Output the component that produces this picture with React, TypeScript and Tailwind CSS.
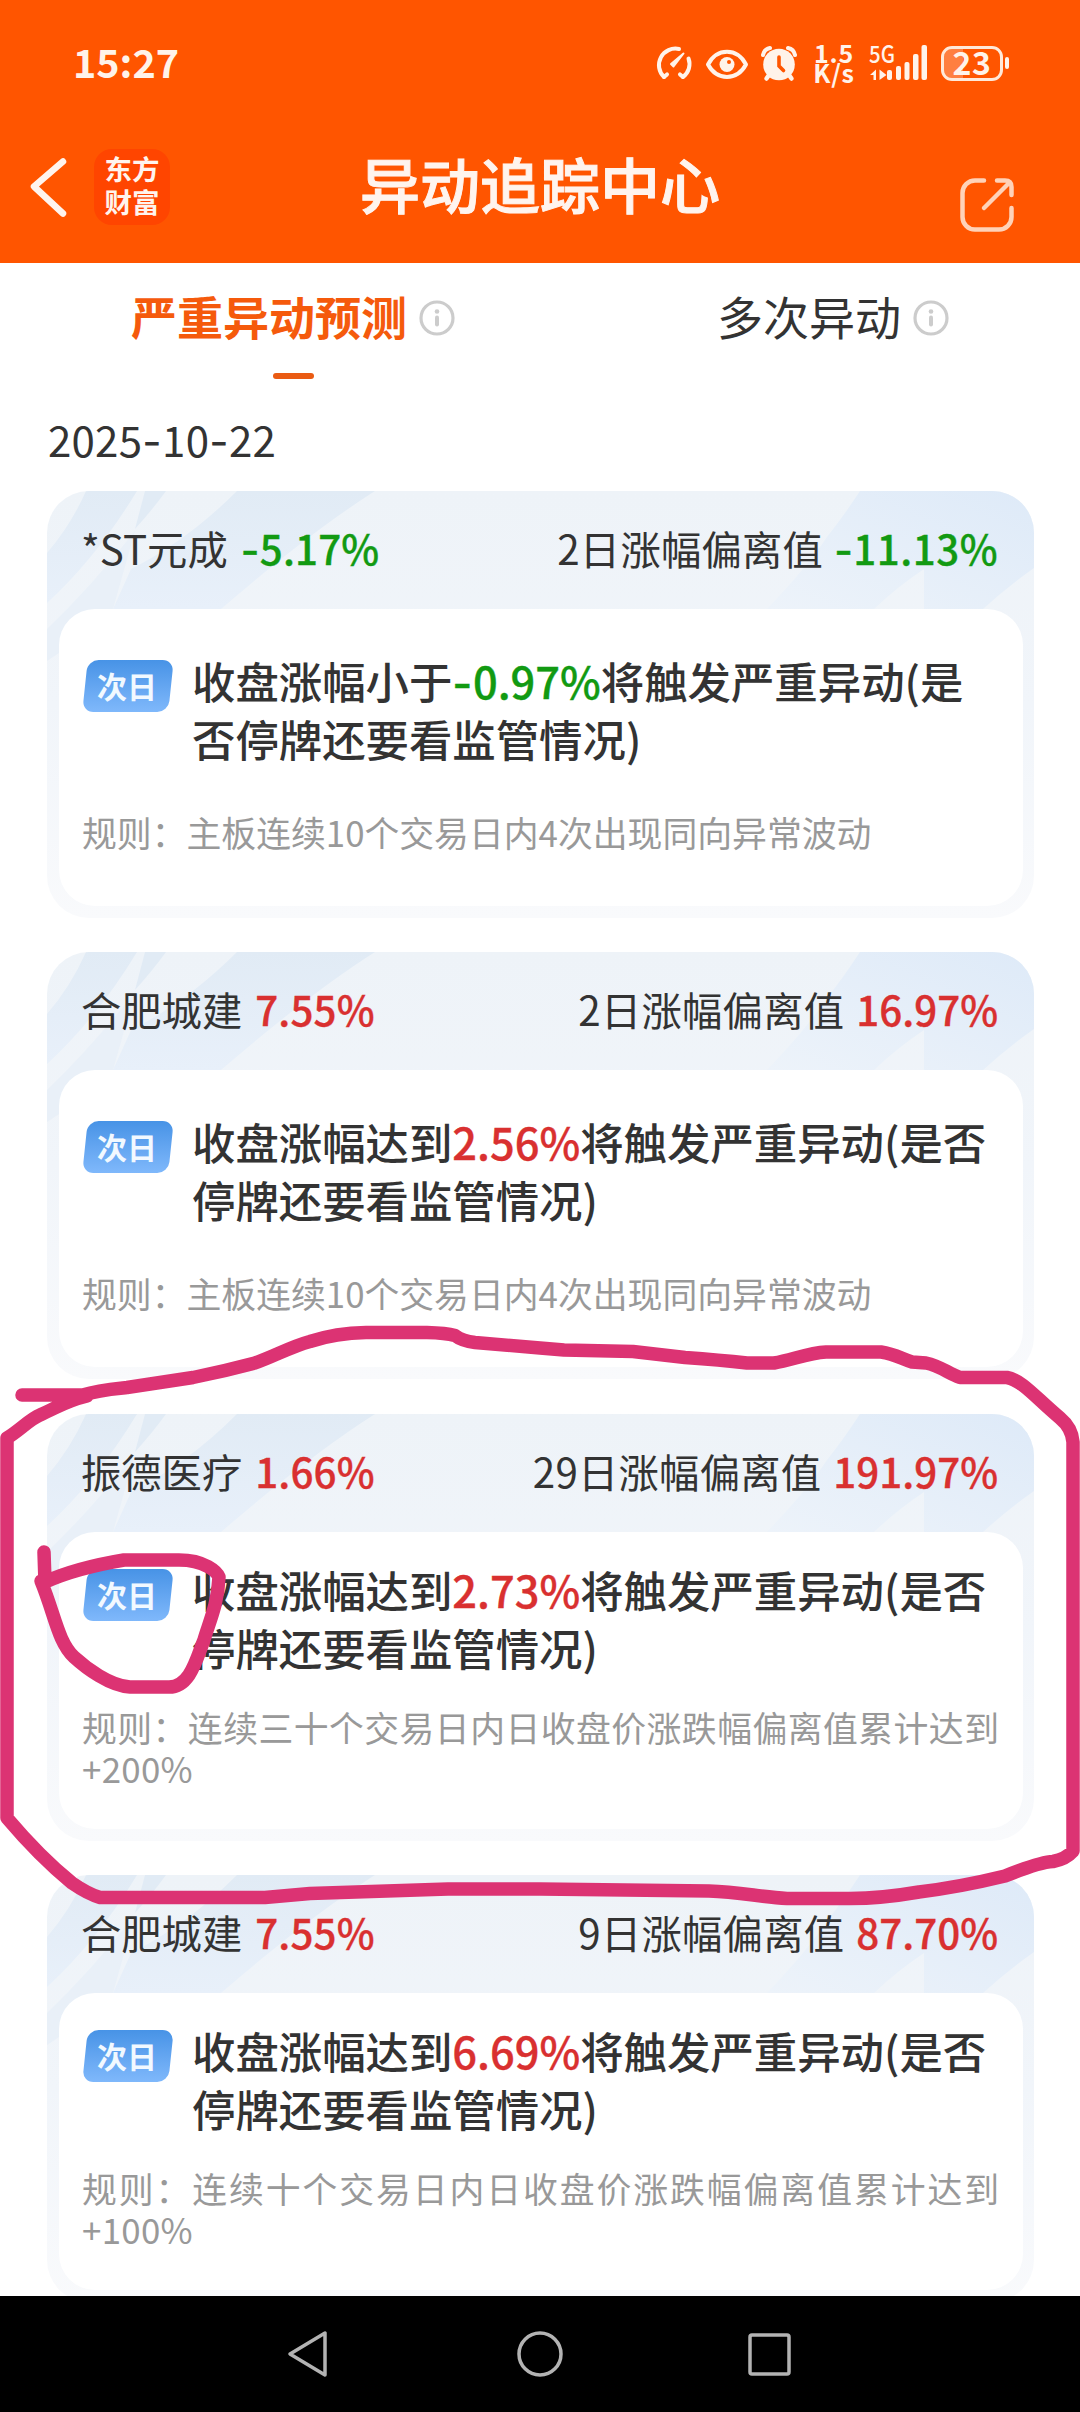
import type { ReactNode } from "react";

type Tone = "up" | "down";

interface Alert {
  name: string;
  change: string;
  tone: Tone;
  days: string;
  deviation: string;
  lead: string;
  trigger: string;
  line1: string;
  line2: string;
  rule: string;
  ruleTail?: string;
}

const alerts: Alert[] = [
  {
    name: "*ST元成",
    change: "-5.17%",
    tone: "down",
    days: "2日涨幅偏离值",
    deviation: "-11.13%",
    lead: "收盘涨幅小于",
    trigger: "-0.97%",
    line1: "将触发严重异动(是",
    line2: "否停牌还要看监管情况)",
    rule: "规则：主板连续10个交易日内4次出现同向异常波动",
  },
  {
    name: "合肥城建",
    change: "7.55%",
    tone: "up",
    days: "2日涨幅偏离值",
    deviation: "16.97%",
    lead: "收盘涨幅达到",
    trigger: "2.56%",
    line1: "将触发严重异动(是否",
    line2: "停牌还要看监管情况)",
    rule: "规则：主板连续10个交易日内4次出现同向异常波动",
  },
  {
    name: "振德医疗",
    change: "1.66%",
    tone: "up",
    days: "29日涨幅偏离值",
    deviation: "191.97%",
    lead: "收盘涨幅达到",
    trigger: "2.73%",
    line1: "将触发严重异动(是否",
    line2: "停牌还要看监管情况)",
    rule: "规则：连续三十个交易日内日收盘价涨跌幅偏离值累计达到",
    ruleTail: "+200%",
  },
  {
    name: "合肥城建",
    change: "7.55%",
    tone: "up",
    days: "9日涨幅偏离值",
    deviation: "87.70%",
    lead: "收盘涨幅达到",
    trigger: "6.69%",
    line1: "将触发严重异动(是否",
    line2: "停牌还要看监管情况)",
    rule: "规则：连续十个交易日内日收盘价涨跌幅偏离值累计达到",
    ruleTail: "+100%",
  },
];

const toneClass: Record<Tone, string> = {
  up: "text-[#d93030] [-webkit-text-stroke:0.35px_#d93030]",
  down: "text-[#129a12] [-webkit-text-stroke:0.35px_#129a12]",
};

/* Wide dashes come from Inter, the digits stay in the page font. */
function Num({ children }: { children: string }) {
  return (
    <>
      {children.split(/(-)/).map((part, i) =>
        part === "-" ? (
          <span key={i} className="font-['Inter',sans-serif] leading-none tracking-[0.5px]">
            -
          </span>
        ) : (
          part
        ),
      )}
    </>
  );
}

function StatusBar() {
  return (
    <div className="flex h-[112px] items-start pl-[73px] pr-[71px] pt-[44px] text-[#fff3ea]">
      <div className="-mt-[2px] text-[39.500px] font-bold leading-[38px]">15:27</div>
      <div className="ml-auto flex h-[38px] items-center">
        <svg width="38" height="38" viewBox="0 0 38 38" fill="none" stroke="currentColor" strokeWidth="4" strokeLinecap="round">
          <path d="M9 33 A16.500 16.500 0 0 1 24 5" />
          <path d="M33.500 14.500 A16 16 0 0 1 28 33" />
          <path d="M9 33 l3 -2.600 M28 33 l-3 -2.600" />
          <path d="M28.5 9.5 L16 20 L18.5 22.5 Z" fill="currentColor" strokeWidth="2" strokeLinejoin="round" />
        </svg>
        <svg className="ml-[12px]" width="44" height="38" viewBox="0 0 44 38" fill="none" stroke="currentColor" strokeWidth="4">
          <path d="M3 20.5 C12 3.500 32 3.500 41 20.5 C32 37 12 37 3 20.500 Z" strokeLinejoin="round" />
          <circle cx="22" cy="20.500" r="7.500" fill="currentColor" stroke="none" />
          <circle cx="24" cy="18" r="2" fill="#ff5500" stroke="none" />
        </svg>
        <svg className="ml-[11px]" width="38" height="38" viewBox="0 0 38 38" fill="none" stroke="currentColor" strokeLinecap="round">
          <circle cx="19" cy="20.500" r="15.800" fill="currentColor" stroke="none" />
          <path d="M3 11 A9 9 0 0 1 10 4 M35 11 A9 9 0 0 0 28 4" strokeWidth="4" />
          <path d="M9 31 L6.500 34.500 M29 31 L31.500 34.500" strokeWidth="4.500" />
          <path d="M19 13 V22 L23.500 26.500" stroke="#ff5500" strokeWidth="3.600" />
        </svg>
        <div className="-mt-[2px] ml-[14px] mr-px flex w-[44px] flex-col items-center text-[25px] font-bold leading-[20px] tracking-[0.8px]">
          <span>1.5</span>
          <span>K/s</span>
        </div>
        <div className="relative ml-[13px] h-[38px] w-[60px]">
          <span className="absolute -left-px -top-[2px] inline-block origin-left scale-x-[0.85] text-[24px] font-medium leading-[22px]">
            5G
          </span>
          <svg className="absolute inset-0" width="60" height="38" viewBox="0 0 60 38" fill="currentColor">
            <path d="M0 31 L6 25.500 V36 H3.500 V31 Z M16.500 31 L9.500 36 V25.500 Z" />
            <rect x="17" y="26" width="5" height="10" rx="2" />
            <rect x="26" y="22" width="5" height="14" rx="2" />
            <rect x="34.500" y="18" width="5" height="18" rx="2" />
            <rect x="43" y="10" width="5.500" height="26" rx="2" />
            <rect x="51.500" y="1" width="5.500" height="35" rx="2" />
          </svg>
        </div>
        <div className="ml-[11px] flex items-center">
          <div className="relative flex h-[35px] w-[62px] items-center justify-center rounded-[11px] border-[3px] border-[#ffe9d9]">
            <div className="absolute inset-y-0 left-0 w-[19px] rounded-l-[8px] bg-white/25" />
            <span className="relative -mt-[4px] text-[32px] font-bold leading-[32px] tracking-[0.5px]">23</span>
          </div>
          <div className="ml-[2px] h-[12px] w-[4px] rounded-sm bg-current" />
        </div>
      </div>
    </div>
  );
}

function TitleBar() {
  return (
    <div className="flex h-[151px] items-start justify-between pl-[28px] pr-[66px] text-[#fff4ee]">
      <div className="flex w-[300px] items-center pt-[37px]">
        <svg width="40" height="76" viewBox="0 0 40 76" fill="none" stroke="currentColor" strokeWidth="6.500" strokeLinecap="round" strokeLinejoin="round">
          <path d="M35 12.500 L6 37.500 L35 64.500" />
        </svg>
        <div className="ml-[26px] flex h-[76px] w-[76px] flex-col items-center justify-center rounded-[18px] bg-[#ff4500] pb-[4px] text-[27.500px] font-bold leading-[33px]">
          <span>东方</span>
          <span>财富</span>
        </div>
      </div>
      <h1 className="pt-[35px] text-[60px] font-medium leading-[72px] [-webkit-text-stroke:1px_#fff4ee]">异动追踪中心</h1>
      <div className="flex w-[262px] justify-end pt-[66px]">
        <svg width="54" height="54" viewBox="0 0 54 54" fill="none" stroke="#ffd2b8" strokeWidth="4.500" strokeLinecap="round" strokeLinejoin="round">
          <path d="M24 2.500 H15 A12.500 12.500 0 0 0 2.500 15 V39 A12.500 12.500 0 0 0 15 51.500 H39 A12.500 12.500 0 0 0 51.500 39 V30" />
          <path d="M37 2.500 H45 Q51.500 2.500 51.500 9 V17" />
          <path d="M24 30 L49 5" />
        </svg>
      </div>
    </div>
  );
}

function InfoIcon() {
  return (
    <svg className="mt-[5px]" width="36" height="36" viewBox="0 0 36 36" fill="none">
      <circle cx="18" cy="18" r="16" stroke="#cccccc" strokeWidth="3.200" />
      <circle cx="18" cy="11.500" r="2.300" fill="#cccccc" />
      <path d="M18 17.500 V24.500" stroke="#cccccc" strokeWidth="4" strokeLinecap="round" />
    </svg>
  );
}

function Tab({ label, active }: { label: string; active?: boolean }) {
  return (
    <div className="flex flex-col items-center">
      <div className="flex items-center gap-[12px]">
        <span
          className={
            active
              ? "text-[46px] font-bold leading-[56px] text-[#f55a0c]"
              : "text-[46px] leading-[56px] text-[#333333]"
          }
        >
          {label}
        </span>
        <InfoIcon />
      </div>
      {active && <div className="mt-[30px] h-[6px] w-[41px] rounded-full bg-[#ea5b13]" />}
    </div>
  );
}

function HeaderPattern() {
  return (
    <svg className="absolute left-0 top-0" width="987" height="170" viewBox="0 0 987 170" fill="none">
      <defs>
        <linearGradient id="ray" x1="0" y1="0" x2="0" y2="1">
          <stop offset="0" stopColor="#e1ebf5" />
          <stop offset="1" stopColor="#e8f0fa" />
        </linearGradient>
        <linearGradient id="glow" x1="1" y1="0" x2="0" y2="1">
          <stop offset="0" stopColor="#deeaf8" />
          <stop offset="1" stopColor="#edf3fa" />
        </linearGradient>
      </defs>
      <path d="M39 0 H90 Q50 66 0 112 V62 Q24 34 39 0 Z" fill="url(#ray)" />
      <path d="M98 0 H119 Q106 18 88 38 Z" fill="#e1ebf5" />
      <path d="M88 40 L66 118 L30 150 L0 170 V138 Q44 96 88 40 Z" fill="#e9f0f8" />
      <path d="M190 0 H328 Q262 42 174 118 H66 Q76 96 84 78 Q140 50 190 0 Z" fill="url(#ray)" />
      <path d="M813 0 H987 V77 Q960 96 936 118 H877 V78 Q850 96 827 118 H720 Q762 74 780 46 Q796 26 813 0 Z" fill="url(#glow)" />
    </svg>
  );
}

function Badge() {
  return (
    <div className="relative flex h-[52px] w-[90px] shrink-0 items-center justify-center">
      <div className="absolute inset-x-[2px] inset-y-0 -skew-x-6 rounded-[11px] bg-linear-to-b from-[#4793e6] to-[#7fb8fb]" />
      <span className="relative -mt-[2px] mr-[2px] text-[30px] font-bold leading-none text-[#f2f9ff]">次日</span>
    </div>
  );
}

function AlertCard({ alert }: { alert: Alert }) {
  const wide = Boolean(alert.ruleTail);
  const color = toneClass[alert.tone];
  return (
    <article className="relative h-[427px] shrink-0 overflow-hidden rounded-[42px] bg-linear-to-b from-[#eef3f8] via-[#f1f5fa] to-[#f9fafc] pl-[12px] pr-[11px]">
      <HeaderPattern />
      <header className="relative flex h-[118px] items-center justify-between pb-[4px] pl-[22px] pr-[25px] text-[40.300px] leading-[58px] whitespace-nowrap">
        <div>
          {alert.name}
          <span className={"ml-[13px] font-medium tracking-[0.15px] " + color}>
            <Num>{alert.change}</Num>
          </span>
        </div>
        <div>
          <span className="tracking-[0.25px]">{alert.days}</span>
          <span
            className={
              alert.tone === "down"
                ? "ml-[11px] font-medium tracking-[0.5px] " + color
                : "ml-[12px] font-medium " + color
            }
          >
            <Num>{alert.deviation}</Num>
          </span>
        </div>
      </header>
      <section
        className={
          wide
            ? "relative h-[297px] rounded-[36px] bg-white pl-[23px] pt-[28px]"
            : "relative h-[297px] rounded-[36px] bg-white pl-[23px] pt-[42px]"
        }
      >
        <div className="flex text-[43.400px] font-medium leading-[58px] whitespace-nowrap">
          <div className="ml-px mr-[19px] pt-[9px]">
            <Badge />
          </div>
          <div>
            <p>
              {alert.lead}
              <span className={color}>
                <Num>{alert.trigger}</Num>
              </span>
              {alert.line1}
            </p>
            <p>{alert.line2}</p>
          </div>
        </div>
        <div
          className={
            wide
              ? "mt-[31px] w-[917px] text-[34.850px] leading-[41px] whitespace-nowrap text-[#999999]"
              : "mt-[45px] w-[917px] text-[34.850px] leading-[41px] whitespace-nowrap text-[#999999]"
          }
        >
          <p className={wide ? "[text-align-last:justify]" : ""}>{alert.rule}</p>
          {alert.ruleTail && <p className="tracking-[0.3px]">{alert.ruleTail}</p>}
        </div>
      </section>
    </article>
  );
}

function NavBar() {
  return (
    <nav className="flex h-[116px] shrink-0 items-center justify-center gap-[183px] bg-black">
      <NavIcon>
        <path d="M40 4 V46 L5 25 Z" />
      </NavIcon>
      <NavIcon>
        <circle cx="24" cy="25" r="21" />
      </NavIcon>
      <NavIcon>
        <rect x="3" y="6" width="39" height="39" rx="2" />
      </NavIcon>
    </nav>
  );
}

function NavIcon({ children }: { children: ReactNode }) {
  return (
    <svg width="48" height="50" viewBox="0 0 48 50" fill="none" stroke="#b3b3b3" strokeWidth="3.500" strokeLinejoin="round">
      {children}
    </svg>
  );
}

/* Freehand marker strokes drawn over the list. */
function MarkerOverlay() {
  return (
    <svg
      className="pointer-events-none absolute left-0 top-0"
      width="1080"
      height="2412"
      viewBox="0 0 1080 2412"
      fill="none"
      stroke="#dc3373"
      strokeWidth="13.500"
      strokeLinecap="round"
      strokeLinejoin="round"
    >
      <path d="M22 1395 H83 C98 1390 112 1389 127 1387.500 L193 1377.500 Q225 1371 255 1363 C275 1356 290 1347 310 1341.500 Q336 1333 366 1332.500 H427 Q446 1333 455 1335.500 Q462 1341 475 1342.500 L540 1348 L564 1350 L633 1351.500 L685 1357.500 Q720 1360 747 1363 H774 C792 1360 808 1353 826 1352 H881 C895 1354 902 1359 912 1362 L926 1363 C940 1366 948 1373 960 1377.500 H1007 C1022 1380 1036 1398 1060 1418 Q1072 1428 1073 1442 V1851 Q1066 1859 1053 1861.500 Q1040 1862 1005 1876 Q960 1887 919 1892 C890 1897 870 1898.500 850 1898.500 H787 C760 1897 740 1892 709 1891 L540 1889 H448 L310 1893.500 L265 1897.500 H100 Q88 1894 72 1883 Q40 1857 7 1818 V1438 C20 1430 30 1419 40 1415 C60 1406 66 1401 87 1396" />
      <path d="M44 1552 L45 1582 Q76 1568 124 1560 H179 C205 1560 217 1572 219 1577 C218 1605 208 1625 204 1640 C196 1660 190 1687 169 1687 H130 C110 1686 86 1668 74 1657 C58 1642 55 1615 41 1581" />
    </svg>
  );
}

export default function App() {
  return (
    <div className="relative flex h-[2412px] w-[1080px] flex-col overflow-hidden bg-white font-['Noto_Sans_CJK_SC',sans-serif] text-[#333333]">
      <div className="h-[263px] shrink-0 bg-[#ff5500]">
        <StatusBar />
        <TitleBar />
      </div>
      <div className="flex h-[137px] shrink-0 items-start justify-around pt-[24px]">
        <Tab label="严重异动预测" active />
        <Tab label="多次异动" />
      </div>
      <main className="flex min-h-0 flex-1 flex-col overflow-hidden pl-[47px] pr-[46px]">
        <div className="flex h-[91px] shrink-0 items-start pl-px pt-[9px] text-[42px] leading-[60px] tracking-[0.250px]">
          <span>
            <Num>2025-10-22</Num>
          </span>
        </div>
        <div className="flex flex-col gap-[34.300px]">
          {alerts.map((a, i) => (
            <AlertCard key={i} alert={a} />
          ))}
        </div>
      </main>
      <NavBar />
      <MarkerOverlay />
    </div>
  );
}
